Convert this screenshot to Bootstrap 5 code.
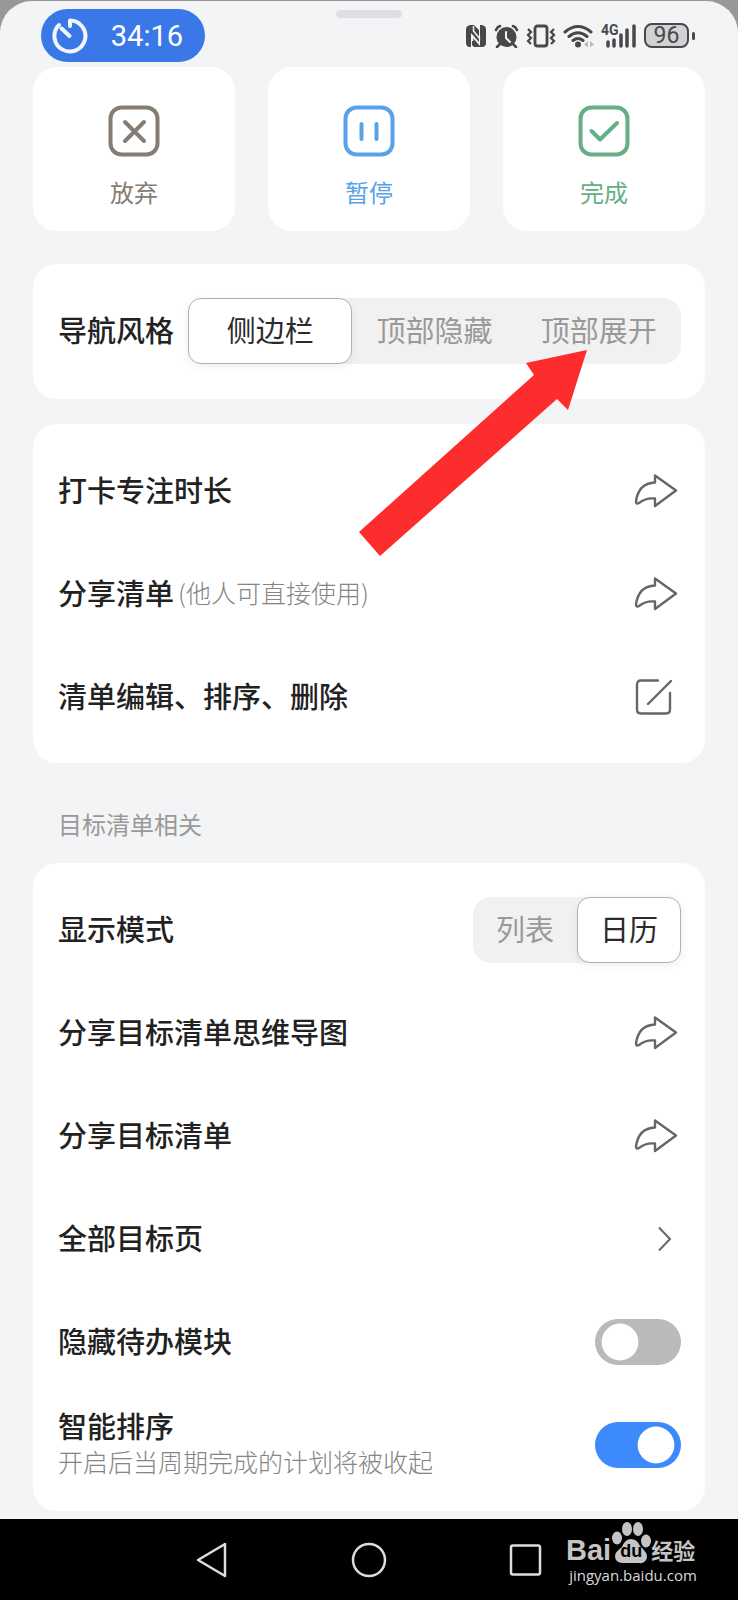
<!DOCTYPE html>
<html lang="zh-CN">
<head>
<meta charset="utf-8">
<meta name="viewport" content="width=device-width, initial-scale=1">
<title>清单设置</title>
<link rel="stylesheet" href="https://cdn.jsdelivr.net/npm/bootstrap@5.3.0/dist/css/bootstrap.min.css">
<style>
  body { background: #989898; padding-top: 1px; font-family: "Noto Sans CJK SC", sans-serif; font-size: 29px; line-height: 36px; color: #222; }
  .sheet { background: #f3f4f6; border-radius: 32px 32px 0 0; }
  .status-bar { height: 66px; padding: 8px 43px 5px 41px; font-family: Roboto, sans-serif; color: #48484a; }
  .status-icons { gap: 7px; }
  .timer-pill { background: #3a78e8; color: #fff; width: 164px; height: 53px; padding: 0 22px 0 10px; font-size: 29px; }
  .grabber { top: 9px; left: 50%; width: 66px; height: 8px; margin-left: -33px; background: #dedfe2; }
  .battery { width: 45px; height: 25px; border: 2px solid #48484a; border-radius: 8px; background: #d2d2d4; font-size: 23px; line-height: 22px; }
  .battery-tip { width: 3px; height: 8px; margin-left: 3px; background: #48484a; }
  .content { padding: 0 33px 8px; }
  .panel { background: #fff; border-radius: 24px; }
  .actions { gap: 33px; }
  .action { border: 0; border-radius: 24px; background: #fff; padding: 38px 0 21px; font-size: 24px; gap: 17px; }
  .action-drop { color: #857d73; }
  .action-pause { color: #58a3e8; }
  .action-done { color: #66ae85; }
  .nav-style { margin: 33px 0 25px; padding: 34px 24px 35px 25px; gap: 14px; }
  .rows { padding: 15px 24px 15px 25px; }
  .setting { min-height: 103px; border: 0; background: none; color: inherit; padding: 0; text-align: left; }
  .caption { font-weight: 500; padding-bottom: 4px; }
  .segments { background: #f1f1f1; border-radius: 18px; }
  .segments .btn-check { width: 1px; height: 1px; }
  .segments label { height: 66px; padding: 0 22px; border: 1px solid transparent; border-radius: 13px; line-height: 60px; color: #999; text-align: center; cursor: pointer; }
  .nav-style .segments label { padding: 0; }
  .segments .btn-check:checked + label { background: #fff; border-color: #b0b0b0; color: #2b2b2b; box-shadow: 0 2px 8px #00000012; }
  .hint { font-size: 25px; color: #858585; font-weight: 300; }
  .group-title { margin: 0; padding: 43px 25px 21px; font-size: 24px; line-height: 36px; font-weight: 400; color: #999; }
  .toggle { padding: 0; min-height: 46px; margin: 0; }
  .toggle .form-check-input { float: none; display: block; width: 86px; height: 46px; margin: 0; border: 0; background-color: #bababa; background-size: 46px 46px; background-position: 2px 50%;
    background-image: url("data:image/svg+xml,%3csvg xmlns='http://www.w3.org/2000/svg' viewBox='-4 -4 8 8'%3e%3ccircle r='3.2' fill='%23fff'/%3e%3c/svg%3e"); }
  .toggle .form-check-input:checked { background-color: #3c8afc; background-position: 38px 50%;
    background-image: url("data:image/svg+xml,%3csvg xmlns='http://www.w3.org/2000/svg' viewBox='-4 -4 8 8'%3e%3ccircle r='3.2' fill='%23fff'/%3e%3c/svg%3e"); }
  .pointer { top: 85px; right: 117px; z-index: 3; pointer-events: none; }
  .system-nav { background: #000; height: 81px; gap: 111px; }
  .system-nav button { border: 0; background: none; padding: 0; width: 46px; height: 46px; line-height: 1; }
  .watermark { right: 38px; top: 2px; width: 134px; color: #c4c4c4; }
  .wm-latin { font: 700 29px/30px "Liberation Sans", sans-serif; }
  .wm-paw { width: 40px; height: 44px; }
  .wm-du { left: 0; right: 0; bottom: 4px; font: 700 18px/20px "Liberation Sans", sans-serif; color: #000; text-align: center; }
  .wm-cjk { font-size: 22px; line-height: 32px; font-weight: 700; }
  .watermark a { display: block; font-family: "Open Sans", sans-serif; font-size: 15px; line-height: 20px; color: #d8d8d8; text-decoration: none; text-align: center; }
</style>
</head>
<body class="min-vh-100 d-flex flex-column">
<svg width="0" height="0" class="position-absolute" aria-hidden="true">
  <symbol id="share" viewBox="0 0 48 36"><path d="M22 2.500 43 17.500 22 33V25.500Q13 24.500 6 30 3 31.500 3 28.500C4.500 17 11 10 22 9.500Z" fill="none" stroke="#666" stroke-width="2.400" stroke-linejoin="round"/></symbol>
</svg>
<div class="sheet flex-grow-1 d-flex flex-column position-relative">
  <header class="status-bar d-flex align-items-center justify-content-between">
    <div class="timer-pill rounded-pill d-flex align-items-center justify-content-between">
      <svg width="38" height="38" viewBox="0 0 38 38" fill="none" stroke="#f1f6ff" stroke-width="4" stroke-linecap="round" stroke-linejoin="round"><path d="M8 8A15.500 15.500 0 1 0 19 3.500V9"/><path d="M10.500 11.500 18.500 19"/></svg>
      <span>34:16</span>
    </div>
    <span class="grabber position-absolute rounded-pill"></span>
    <div class="status-icons d-flex align-items-center">
      <svg width="22" height="24" viewBox="0 0 22 24"><path fill="#48484a" d="M5 1h9l-5 0 5 5v12l-8-9v14H4Q1 22 1 19V5Q1 2 5 1Z"/><path fill="#48484a" d="M15 1h2q4 1 4 4v14q0 4-4 4H9l-2-2v-8l8 9Z"/><path d="M8.500 2v5l6.500 8M7.500 11v6" stroke="#f3f4f6" stroke-width="1.500" fill="none"/></svg>
      <svg width="25" height="24" viewBox="0 0 25 24" fill="none" stroke="#48484a" stroke-width="2.500" stroke-linecap="round"><circle cx="12.500" cy="13" r="8.800" fill="#48484a"/><path d="M2 6Q3 3 6 2M23 6Q22 3 19 2M6 20l-3 3M19 20l3 3"/><path d="M12 8v6l4 4" stroke="#f3f4f6" stroke-width="2"/></svg>
      <svg width="30" height="24" viewBox="0 0 30 24" fill="none" stroke="#48484a" stroke-width="2.800"><rect x="9" y="2" width="12" height="20" rx="2.500"/><path d="M2 5l3 3-3 3 3 3-3 3 3 3M28 5l-3 3 3 3-3 3 3 3-3 3" stroke-width="2.300"/></svg>
      <svg width="31" height="24" viewBox="0 0 31 24" fill="none" stroke="#48484a" stroke-width="3" stroke-linecap="round"><path d="M2 8Q15 -3 28 8M6 12.500Q15 5 24 12.500M10 16.500Q15 12.500 20 16.500"/><circle cx="15" cy="20.500" r="3" fill="#48484a" stroke="none"/><path d="M25 17l-4 3.500 4 3ZM27 17l4 3.500-4 3Z" fill="#bbb" stroke="none"/></svg>
      <svg width="36" height="26" viewBox="0 0 36 26"><text x="0" y="12" font-size="14" font-weight="700" fill="#48484a">4G</text><path d="M7 19v4M13 17v6M20 12v11M26 7v16M33 3v20" stroke="#48484a" stroke-width="3.500" stroke-linecap="round"/></svg>
      <div class="d-flex align-items-center">
        <div class="battery text-center">96</div>
        <span class="battery-tip rounded-pill"></span>
      </div>
    </div>
  </header>

  <main class="content flex-grow-1">
    <div class="actions d-flex">
      <button type="button" class="action action-drop flex-fill d-flex flex-column align-items-center">
        <svg width="52" height="52" viewBox="0 0 52 52" fill="none" stroke="currentColor" stroke-width="4" stroke-linecap="round"><rect x="2.500" y="2.500" width="47" height="47" rx="11"/><path d="M17 17 36 36M36 17 17 36"/></svg>
        <span>放弃</span>
      </button>
      <button type="button" class="action action-pause flex-fill d-flex flex-column align-items-center">
        <svg width="52" height="52" viewBox="0 0 52 52" fill="none" stroke="currentColor" stroke-width="4" stroke-linecap="round"><rect x="2.500" y="2.500" width="47" height="47" rx="11"/><path d="M18.500 19V34M33.500 19V34"/></svg>
        <span>暂停</span>
      </button>
      <button type="button" class="action action-done flex-fill d-flex flex-column align-items-center">
        <svg width="52" height="52" viewBox="0 0 52 52" fill="none" stroke="currentColor" stroke-width="4" stroke-linecap="round" stroke-linejoin="round"><rect x="2.500" y="2.500" width="47" height="47" rx="11"/><path d="M13.500 26 22 34.500 39 18"/></svg>
        <span>完成</span>
      </button>
    </div>

    <section class="nav-style panel d-flex align-items-center position-relative">
      <span class="caption flex-shrink-0">导航风格</span>
      <div class="segments row g-0 flex-grow-1 flex-nowrap" role="group" aria-label="导航风格">
        <input class="btn-check" type="radio" name="nav" id="nav-side" checked><label class="col" for="nav-side">侧边栏</label>
        <input class="btn-check" type="radio" name="nav" id="nav-hide"><label class="col" for="nav-hide">顶部隐藏</label>
        <input class="btn-check" type="radio" name="nav" id="nav-open"><label class="col" for="nav-open">顶部展开</label>
      </div>
      <svg class="pointer position-absolute" width="230" height="208" viewBox="0 0 230 208" aria-hidden="true"><path fill="#fd2c2d" d="M229 1 210 61 199 50 22 207 1 183 176 26 168 14Z"/></svg>
    </section>

    <section class="panel rows">
      <button type="button" class="setting w-100 d-flex align-items-center justify-content-between"><span class="caption">打卡专注时长</span><svg width="48" height="36"><use href="#share"/></svg></button>
      <button type="button" class="setting w-100 d-flex align-items-center justify-content-between"><span class="caption d-flex gap-1">分享清单<span class="hint">(他人可直接使用)</span></span><svg width="48" height="36"><use href="#share"/></svg></button>
      <button type="button" class="setting w-100 d-flex align-items-center justify-content-between"><span class="caption">清单编辑、排序、删除</span><svg width="48" height="36" viewBox="0 0 48 36" fill="none" stroke="#666" stroke-width="2.400" stroke-linecap="round"><path d="M25 1.500H8Q4 1.500 4 5.500V30.500Q4 34.500 8 34.500H33Q37 34.500 37 30.500V14M15 25 38 2"/></svg></button>
    </section>

    <h2 class="group-title">目标清单相关</h2>

    <section class="panel rows">
      <div class="setting d-flex align-items-center justify-content-between">
        <span class="caption">显示模式</span>
        <div class="segments d-flex" role="group" aria-label="显示模式">
          <input class="btn-check" type="radio" name="mode" id="mode-list"><label for="mode-list">列表</label>
          <input class="btn-check" type="radio" name="mode" id="mode-cal" checked><label for="mode-cal">日历</label>
        </div>
      </div>
      <button type="button" class="setting w-100 d-flex align-items-center justify-content-between"><span class="caption">分享目标清单思维导图</span><svg width="48" height="36"><use href="#share"/></svg></button>
      <button type="button" class="setting w-100 d-flex align-items-center justify-content-between"><span class="caption">分享目标清单</span><svg width="48" height="36"><use href="#share"/></svg></button>
      <a href="#goals" class="setting d-flex align-items-center justify-content-between text-decoration-none"><span class="caption">全部目标页</span><svg width="48" height="36" viewBox="0 0 48 36" fill="none" stroke="#666" stroke-width="2"><path d="M26 6.500 37 18 26 29.500"/></svg></a>
      <div class="setting d-flex align-items-center justify-content-between">
        <label class="caption" for="hide-todo">隐藏待办模块</label>
        <div class="toggle form-check form-switch"><input class="form-check-input" type="checkbox" role="switch" id="hide-todo"></div>
      </div>
      <div class="setting d-flex align-items-center justify-content-between">
        <label class="caption" for="smart-sort">智能排序<span class="hint d-block">开启后当周期完成的计划将被收起</span></label>
        <div class="toggle form-check form-switch"><input class="form-check-input" type="checkbox" role="switch" id="smart-sort" checked></div>
      </div>
    </section>
  </main>

  <footer class="system-nav d-flex align-items-center justify-content-center position-relative">
    <button type="button" aria-label="返回"><svg width="46" height="46" viewBox="0 0 46 46" fill="none" stroke="#ddd" stroke-width="2.500" stroke-linejoin="round"><path d="M36 7V39L9 23Z"/></svg></button>
    <button type="button" aria-label="主页"><svg width="46" height="46" viewBox="0 0 46 46" fill="none" stroke="#ddd" stroke-width="2.500"><circle cx="23" cy="23" r="16"/></svg></button>
    <button type="button" aria-label="最近任务"><svg width="46" height="46" viewBox="0 0 46 46" fill="none" stroke="#ddd" stroke-width="2.500"><rect x="8" y="8.500" width="29" height="29" rx="2"/></svg></button>
    <div class="watermark position-absolute">
      <div class="d-flex align-items-end">
        <span class="wm-latin">Bai</span>
        <span class="wm-paw position-relative flex-shrink-0">
          <svg class="d-block" width="40" height="44" viewBox="45 0 40 44" fill="#c4c4c4"><ellipse cx="51" cy="17" rx="5" ry="6.500"/><ellipse cx="61" cy="8" rx="5" ry="7"/><ellipse cx="72" cy="8" rx="5" ry="7"/><ellipse cx="80" cy="20" rx="5" ry="6.500"/><path d="M65 18Q71 18 74 25 82 32 81 37 79 43 73 42H57Q49 42 49 35 49 31 56 26 59 18 65 18Z"/></svg>
          <span class="wm-du position-absolute">du</span>
        </span>
        <span class="wm-cjk flex-shrink-0">经验</span>
      </div>
      <a href="#jingyan">jingyan.baidu.com</a>
    </div>
  </footer>
</div>
<script src="https://cdn.jsdelivr.net/npm/bootstrap@5.3.0/dist/js/bootstrap.bundle.min.js"></script>
</body>
</html>
